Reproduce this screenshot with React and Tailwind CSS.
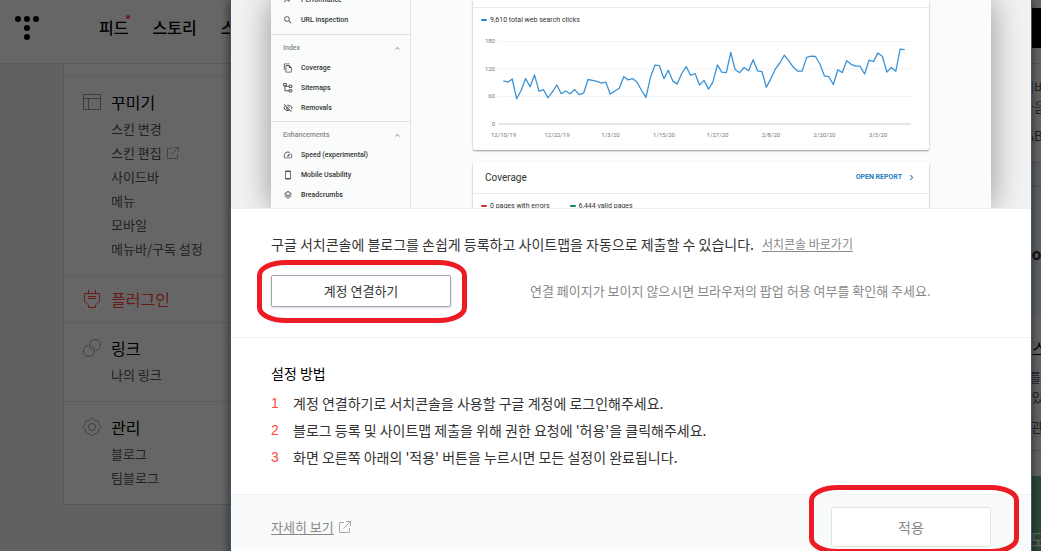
import { MdChevronRight, MdExpandLess, MdOutlineFileCopy, MdOutlineLayers, MdOutlineVisibilityOff, MdSearch, MdSmartphone, MdSpeed, MdTrendingUp } from 'react-icons/md'

const clicks = [
  94, 91, 98, 55, 73, 99, 81, 107, 71, 75, 57, 70, 85, 66, 72, 66, 75, 64, 67, 97,
  95, 93, 89, 91, 65, 72, 78, 103, 96, 99, 91, 73, 58, 102, 128, 127, 99, 117, 94, 87,
  110, 125, 106, 110, 85, 95, 76, 91, 129, 113, 112, 156, 118, 112, 123, 116, 140, 116, 114, 80,
  99, 120, 133, 150, 138, 124, 115, 115, 145, 148, 147, 130, 105, 103, 86, 118, 112, 138, 130, 126,
  126, 109, 139, 136, 155, 147, 113, 123, 115, 163, 162,
]
const dates = ['12/10/19', '12/22/19', '1/3/20', '1/15/20', '1/27/20', '2/8/20', '2/20/20', '3/3/20']

const steps = [
  '계정 연결하기로 서치콘솔을 사용할 구글 계정에 로그인해주세요.',
  "블로그 등록 및 사이트맵 제출을 위해 권한 요청에 '허용'을 클릭해주세요.",
  "화면 오른쪽 아래의 '적용' 버튼을 누르시면 모든 설정이 완료됩니다.",
]

const menus = [
  { title: '꾸미기', icon: LayoutIcon, items: ['스킨 변경', '스킨 편집', '사이드바', '메뉴', '모바일', '메뉴바/구독 설정'] },
  { title: '플러그인', icon: PlugIcon, items: [], active: true },
  { title: '링크', icon: LinkIcon, items: ['나의 링크'] },
  { title: '관리', icon: GearIcon, items: ['블로그', '팀블로그'] },
]

function LayoutIcon() {
  return (
    <svg width="18" height="18" viewBox="0 0 18 18" fill="none" stroke="currentColor">
      <path d="M.5 1.500h17v15H.5zM.5 5.500h17M5.500 5.500v11" />
    </svg>
  )
}

function PlugIcon() {
  return (
    <svg width="18" height="18" viewBox="0 0 18 18" fill="none" stroke="currentColor">
      <path d="M5.500 0v3.500M12.500 0v3.500M1.500 3.500h15v8l-4 3.500v2.500h-7V15l-4-3.500zM5 6.500h8M5 8.500h8" />
    </svg>
  )
}

function LinkIcon() {
  return (
    <svg width="18" height="18" viewBox="0 0 18 18" fill="none" stroke="currentColor">
      <path d="M13 11.400A5.500 5.500 0 1 0 6.700 7.300c.1 1.900 1 3.200 2.600 3.900M5 6.600a5.500 5.500 0 1 0 6.300 4.100c-.3-1.800-1.200-3-2.800-3.600" />
    </svg>
  )
}

function GearIcon() {
  const points = Array.from({ length: 96 }, (_, i) => {
    const angle = (i / 96) * Math.PI * 2
    const r = 7.9 + 0.7 * Math.cos(angle * 8)
    return `${(9 + r * Math.cos(angle)).toFixed(2)},${(9 + r * Math.sin(angle)).toFixed(2)}`
  }).join(' ')
  return (
    <svg width="18" height="18" viewBox="0 0 18 18" fill="none" stroke="currentColor">
      <polygon points={points} />
      <circle cx="9" cy="9" r="3.500" />
    </svg>
  )
}

function SitemapIcon({ size, className }) {
  return (
    <svg width={size} height={size} viewBox="0 0 18 18" fill="none" stroke="currentColor" strokeWidth="1.800" className={className}>
      <path d="M1 1h5v4H1zM11 4h5v4h-5zM11 12h5v4h-5zM3.500 5v9H11M3.500 6H11" />
    </svg>
  )
}

function ExternalIcon() {
  return (
    <svg width="12" height="12" viewBox="0 0 12 12" fill="none" stroke="#aaa" className="shrink-0">
      <path d="M5 1.500H.5v10h10V7M7 .5h4.500V5M11.500.5l-7 7" />
    </svg>
  )
}

function Marker({ height, className }) {
  return (
    <svg width="210" height={height} fill="none" className={`pointer-events-none absolute ${className}`}>
      <rect x="2.500" y="2.500" width="205" height={height - 5} rx="26" ry="13" stroke="#ed1c24" strokeWidth="5" />
    </svg>
  )
}

function BlogHeader() {
  return (
    <header className="flex h-[65px] items-start border-b border-[#e0e2e4] bg-white">
      <a href="#home" aria-label="홈" className="mt-4 ml-[15px]">
        <svg width="24" height="24" viewBox="0 0 24 24">
          <circle cx="3" cy="3" r="3" />
          <circle cx="12" cy="3" r="3" />
          <circle cx="21" cy="3" r="3" />
          <circle cx="12" cy="12" r="3" />
          <circle cx="12" cy="21" r="3" />
        </svg>
      </a>
      <nav className="mt-[15px] ml-[60px] flex gap-6 text-base leading-6 font-medium">
        <a href="#feed" className="relative">
          피드
          <span className="absolute top-0 -right-0.5 size-1 rounded-full bg-[#ff4a3d]" />
        </a>
        <a href="#story">스토리</a>
        <a href="#skin">스킨</a>
      </nav>
      <div className="mt-2 ml-auto h-10 w-[41px] bg-black" />
    </header>
  )
}

function BlogSidebar() {
  return (
    <aside className="ml-[63px] w-[210px] shrink-0 self-start border-x border-b border-[#d5d8dc] bg-white pt-3">
      {menus.map((menu) => {
        const Icon = menu.icon
        return (
          <section key={menu.title} className={`border-t border-[#e8e8e8] px-[19px] ${menu.active ? 'py-[11px]' : 'pt-[13px] pb-[14px]'}`}>
            <h2 className={`flex items-center gap-[10px] text-base leading-6 ${menu.active ? 'text-[#ff4a3d]' : 'text-black'}`}>
              <span className={menu.active ? '' : 'text-[#999]'}>
                <Icon />
              </span>
              {menu.title}
            </h2>
            {menu.items.length > 0 && (
              <ul className="mt-[3px] pl-7 text-[13px] leading-6 text-[#555]">
                {menu.items.map((item) => (
                  <li key={item}>
                    <a href="#menu" className="flex items-center gap-[5px]">
                      {item}
                      {item === '스킨 편집' && <ExternalIcon />}
                    </a>
                  </li>
                ))}
              </ul>
            )}
          </section>
        )
      })}
    </aside>
  )
}

function BlogNews() {
  return (
    <div className="ml-auto flex w-[41px] shrink-0 flex-col overflow-hidden text-[13px] leading-5 whitespace-nowrap text-[#555]">
      <div className="border-b border-[#d5d8dc] bg-white pt-[13px] pb-[15px] pl-[22px]">
        <p>서비</p>
        <p>다음</p>
        <p className="mt-[9px] pb-px pl-1">AB</p>
      </div>
      <div className="h-6 border-b border-[#d5d8dc]" />
      <p className="pt-[54px] pb-[50px] pl-5 text-base leading-6 font-bold text-[#333]">Doc</p>
      <div className="h-[136px] border-b border-[#d5d8dc] bg-white pt-[21px] pl-[17px]">
        <p className="text-base text-black">티스</p>
        <p className="mt-[7px]">글를</p>
        <p>수 있</p>
        <p className="mt-[10px] pl-[2px]">관관</p>
      </div>
      <div className="h-[25px] bg-white" />
      <div className="flex-1 bg-[#72b98d] pt-[51px] pl-[30px] text-lg leading-6 text-white">모</div>
    </div>
  )
}

function ConsoleRow({ icon: Icon, children }) {
  return (
    <li className="flex h-5 items-center gap-2 pl-3 text-[7px] font-medium text-[#333]">
      <Icon size={10} className="text-[#555]" />
      {children}
    </li>
  )
}

function ConsoleHeading({ children }) {
  return (
    <h3 className="flex h-5 items-center justify-between pr-2 pl-3 text-[7px] font-medium text-[#888]">
      {children}
      <MdExpandLess size={9} />
    </h3>
  )
}

function ConsoleMenu() {
  return (
    <div className="w-[140px] shrink-0 self-end border-r border-[#e4e4e4] pb-[3px]">
      <ul className="pb-1">
        <ConsoleRow icon={MdTrendingUp}>Performance</ConsoleRow>
        <ConsoleRow icon={MdSearch}>URL inspection</ConsoleRow>
      </ul>
      <div className="border-t border-[#e0e0e0] py-[3px]">
        <ConsoleHeading>Index</ConsoleHeading>
        <ul>
          <ConsoleRow icon={MdOutlineFileCopy}>Coverage</ConsoleRow>
          <ConsoleRow icon={SitemapIcon}>Sitemaps</ConsoleRow>
          <ConsoleRow icon={MdOutlineVisibilityOff}>Removals</ConsoleRow>
        </ul>
      </div>
      <div className="border-t border-[#e0e0e0] pt-[3px]">
        <ConsoleHeading>Enhancements</ConsoleHeading>
        <ul>
          <ConsoleRow icon={MdSpeed}>Speed (experimental)</ConsoleRow>
          <ConsoleRow icon={MdSmartphone}>Mobile Usability</ConsoleRow>
          <ConsoleRow icon={MdOutlineLayers}>Breadcrumbs</ConsoleRow>
        </ul>
      </div>
    </div>
  )
}

function ClicksChart() {
  const points = clicks.map((value, i) => `${(30.3 + i * 4.46).toFixed(1)},${(96 - value * 0.459).toFixed(1)}`).join(' ')
  return (
    <svg viewBox="0 0 456 122" className="block w-full" fontSize="6" fill="#777">
      {[180, 120, 60, 0].map((tick) => (
        <g key={tick}>
          <path d={`M25 ${96 - tick * 0.459}H438`} stroke={tick ? '#f3f3f3' : '#ccc'} />
          <text x="22" y={98 - tick * 0.459} textAnchor="end">{tick}</text>
        </g>
      ))}
      {dates.map((date, i) => (
        <text key={date} x={30.5 + i * 53.5} y="109" textAnchor="middle">{date}</text>
      ))}
      <polyline points={points} fill="none" stroke="#3b93d6" strokeWidth="1.300" strokeLinejoin="round" />
    </svg>
  )
}

function Legend({ color, children }) {
  return (
    <span className="flex items-center gap-[3px]">
      <span className={`h-0.5 w-1.5 rounded-full ${color}`} />
      {children}
    </span>
  )
}

function ConsolePreview() {
  return (
    <div className="h-[209px] overflow-hidden border-b border-[#eee] bg-[#f2f2f2] px-10">
      <div className="flex h-full bg-[#fafcfb] font-[Roboto,sans-serif] shadow-[0_0_30px_rgba(0,0,0,0.4)]">
        <ConsoleMenu />
        <div className="flex-1 px-[62px] text-[7px] text-[#333]">
          <section className="rounded-b-xs bg-white shadow-[0_1px_2px_rgba(0,0,0,0.4)]">
            <div className="h-2 border-b border-[#eaeaea]" />
            <div className="flex h-5 items-end pl-2 leading-4">
              <Legend color="bg-[#2489d8]">9,610 total web search clicks</Legend>
            </div>
            <ClicksChart />
          </section>
          <section className="mt-3 rounded-t-xs bg-white shadow-[0_1px_2px_rgba(0,0,0,0.4)]">
            <div className="flex h-8 items-center justify-between border-b border-[#eaeaea] px-3">
              <h3 className="text-[10px]">Coverage</h3>
              <a href="#report" className="flex items-center gap-1 font-bold text-[#2580c3]">
                OPEN REPORT
                <MdChevronRight size={11} />
              </a>
            </div>
            <div className="flex h-6 items-center gap-5 pl-2">
              <Legend color="bg-[#d32f2f]">0 pages with errors</Legend>
              <Legend color="bg-[#128a52]">6,444 valid pages</Legend>
            </div>
          </section>
        </div>
      </div>
    </div>
  )
}

function PluginDialog() {
  return (
    <div role="dialog" aria-label="구글 서치콘솔" className="w-[802px] border-x border-[#40566e] bg-white text-[#333] shadow-[0_0_10px_rgba(0,0,0,0.6)]">
      <ConsolePreview />
      <section className="border-b border-[#f0f0f2] px-10 pt-[23px] pb-[30px]">
        <p className="flex items-center gap-2 text-sm leading-6">
          구글 서치콘솔에 블로그를 손쉽게 등록하고 사이트맵을 자동으로 제출할 수 있습니다.
          <a href="#console" className="text-xs text-[#888] underline underline-offset-2">서치콘솔 바로가기</a>
        </p>
        <div className="mt-[19px] flex items-center text-[13px]">
          <div className="relative">
            <button className="h-8 w-[180px] rounded-xs border border-[#9ba5b3] bg-white shadow-[0_1px_3px_rgba(0,0,0,0.15)]">계정 연결하기</button>
            <Marker height={63} className="-top-[15px] -left-[14px]" />
          </div>
          <p className="ml-[79px] text-[#888]">연결 페이지가 보이지 않으시면 브라우저의 팝업 허용 여부를 확인해 주세요.</p>
        </div>
      </section>
      <section className="px-10 pt-[23px] pb-[23px] text-sm">
        <h2 className="leading-6 text-black">설정 방법</h2>
        <ol className="mt-[5px] leading-[27px]">
          {steps.map((step, i) => (
            <li key={step} className="flex">
              <span className="w-[22px] font-['Liberation_Sans',sans-serif] text-[#ff4a3d]">{i + 1}</span>
              {step}
            </li>
          ))}
        </ol>
      </section>
      <footer className="flex items-center justify-between border-t border-[#eef1f6] bg-[#f9fbfb] px-10 py-3 text-sm text-[#888]">
        <a href="#more" className="flex items-center gap-[5px] text-[13px]">
          <span className="underline underline-offset-2">자세히 보기</span>
          <ExternalIcon />
        </a>
        <div className="relative">
          <button className="h-10 w-40 rounded-xs border border-[#dfe4ee] bg-white">적용</button>
          <Marker height={69} className="-top-[22px] -left-[22px]" />
        </div>
      </footer>
    </div>
  )
}

function App() {
  return (
    <div className="relative flex h-screen flex-col overflow-hidden bg-[#f0f3f7] font-['Noto_Sans_CJK_KR',sans-serif]">
      <BlogHeader />
      <main className="flex flex-1">
        <BlogSidebar />
        <BlogNews />
      </main>
      <div className="absolute inset-0 flex items-start justify-end overflow-hidden bg-black/60 pr-[9px]">
        <PluginDialog />
      </div>
    </div>
  )
}

export default App
